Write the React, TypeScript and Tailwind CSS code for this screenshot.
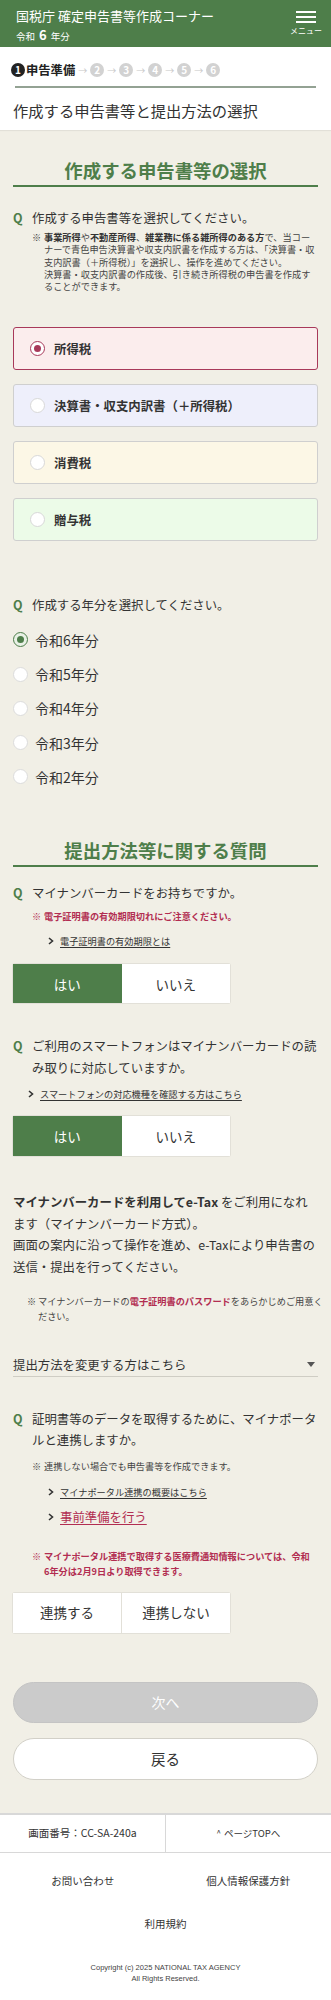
import React from 'react';

const GREEN = 'bg-[#4e7e4a]';

function Chevron({ className = '' }: { className?: string }) {
  return (
    <svg width="6" height="8" viewBox="0 0 6 8" className={`shrink-0 ${className}`}>
      <path d="M1 1 L4.5 4 L1 7" fill="none" stroke="#333" strokeWidth="1.6" />
    </svg>
  );
}

function Step({ n }: { n: number }) {
  return (
    <>
      <span className="mx-[3px] text-[9px] leading-none text-[#c8c8c8]">→</span>
      <span className="flex h-[14px] w-[14px] items-center justify-center rounded-full bg-[#d2d2d2] text-[10px] font-bold leading-none text-white">
        {n}
      </span>
    </>
  );
}

function CardRadio({ label, bg, selected }: { label: string; bg: string; selected?: boolean }) {
  return (
    <div
      className={`flex h-[43.5px] items-center rounded-[3px] pl-[16px] ${bg} ${
        selected ? 'border-[1.5px] border-[#a8395a]' : 'border-[1.5px] border-[#cfcfcf]'
      }`}
    >
      {selected ? (
        <span className="flex h-[15px] w-[15px] items-center justify-center rounded-full border-[1.5px] border-[#a8395a] bg-white">
          <span className="h-[7px] w-[7px] rounded-full bg-[#a8395a]" />
        </span>
      ) : (
        <span className="h-[15px] w-[15px] rounded-full border border-[#d8d8d8] bg-white" />
      )}
      <span className="ml-[9px] text-[12.4px] font-bold leading-[16px] text-[#333]">{label}</span>
    </div>
  );
}

function YearRadio({ label, selected }: { label: string; selected?: boolean }) {
  return (
    <div className="flex h-[20px] items-center">
      {selected ? (
        <span className="flex h-[15px] w-[15px] items-center justify-center rounded-full border-[1.5px] border-[#4e7e4a] bg-[#e9f1e6]">
          <span className="h-[7px] w-[7px] rounded-full bg-[#4e7e4a]" />
        </span>
      ) : (
        <span className="h-[15px] w-[15px] rounded-full border border-[#dcdcdc] bg-white" />
      )}
      <span className="ml-[7px] text-[14px] leading-[20px] text-[#333]">{label}</span>
    </div>
  );
}

function Question({ children }: { children: React.ReactNode }) {
  return (
    <div className="flex text-[12.4px] text-[#333]">
      <span className="w-[19px] shrink-0 font-bold text-[#4e7e4a]">Q</span>
      <span>{children}</span>
    </div>
  );
}

function Heading({ children }: { children: React.ReactNode }) {
  return (
    <div className="h-[29px] border-b-2 border-[#4e7e4a] text-center text-[18.4px] font-bold leading-[24px] text-[#4e7e4a]">
      {children}
    </div>
  );
}

function YesNo({ left, right, leftActive }: { left: string; right: string; leftActive?: boolean }) {
  return (
    <div className="flex h-full w-[217px] rounded-[2px] shadow-[0_0_0_1px_#e2e0d8]">
      <div
        className={`flex flex-1 items-center justify-center text-[13.5px] ${
          leftActive ? `${GREEN} text-white` : 'bg-white text-[#333]'
        }`}
      >
        {left}
      </div>
      <div
        className={`flex flex-1 items-center justify-center bg-white text-[13.5px] text-[#333] ${
          leftActive ? '' : 'border-l border-[#e2e0d8]'
        }`}
      >
        {right}
      </div>
    </div>
  );
}

export default function App() {
  return (
    <div
      className="w-[331px] bg-[#f1efe6] text-[#333]"
      style={{ fontFamily: '"Noto Sans CJK JP", "Noto Sans", sans-serif' }}
    >
      {/* header */}
      <header className={`flex h-[47px] justify-between ${GREEN} pl-[16px] pr-[9px] text-white`}>
        <div className="pt-[8px]">
          <div className="text-[13px] leading-[16px]">国税庁 確定申告書等作成コーナー</div>
          <div className="mt-[4px] flex h-[14px] items-baseline">
            <span className="text-[9.5px] leading-[14px]">令和</span>
            <span className="mx-[4px] text-[13px] font-bold leading-[14px]">6</span>
            <span className="text-[9.5px] leading-[14px]">年分</span>
          </div>
        </div>
        <div className="flex flex-col items-center pt-[11px]">
          <span className="block h-[2px] w-[20px] bg-white" />
          <span className="mt-[3px] block h-[2px] w-[20px] bg-white" />
          <span className="mt-[3px] block h-[2px] w-[20px] bg-white" />
          <span className="mt-[3px] text-[8px] leading-[10px]">メニュー</span>
        </div>
      </header>

      {/* progress + title */}
      <section className="h-[83px] bg-white px-[11px] pt-[15px] shadow-[0_1px_1px_rgba(0,0,0,0.06)]">
        <div className="flex h-[16px] items-center">
          <span className="flex h-[14px] w-[14px] items-center justify-center rounded-full bg-[#222] text-[10px] font-bold leading-none text-white">
            1
          </span>
          <span className="ml-[1px] text-[12.3px] font-bold leading-[16px] text-[#222]">申告準備</span>
          <Step n={2} />
          <Step n={3} />
          <Step n={4} />
          <Step n={5} />
          <Step n={6} />
        </div>
        <div className="mx-[4px] mt-[8px] h-[1.5px] bg-[#93a293]" />
        <div className="mt-[12.5px] h-[20px] pl-[2px] text-[15.3px] leading-[20px] text-[#333]">
          作成する申告書等と提出方法の選択
        </div>
      </section>

      <main className="px-[13px] pb-[33px] pt-[28px]">
        <Heading>作成する申告書等の選択</Heading>

        <div className="mt-[21px] leading-[20px]">
          <Question>作成する申告書等を選択してください。</Question>
        </div>
        <div className="mt-[3px] flex pl-[19px] text-[9.2px] leading-[12.3px] text-[#444]">
          <span className="w-[12px] shrink-0">※</span>
          <p>
            <b className="font-bold text-[#333]">事業所得</b>や<b className="font-bold text-[#333]">不動産所得</b>、
            <b className="font-bold text-[#333]">雑業務に係る雑所得のある方</b>
            で、当コーナーで青色申告決算書や収支内訳書を作成する方は、「決算書・収支内訳書（＋所得税）」を選択し、操作を進めてください。
            <br />
            決算書・収支内訳書の作成後、引き続き所得税の申告書を作成することができます。
          </p>
        </div>

        <div className="mt-[34.5px] flex flex-col gap-[13.5px]">
          <CardRadio label="所得税" bg="bg-[#fbeded]" selected />
          <CardRadio label="決算書・収支内訳書（＋所得税）" bg="bg-[#eeeffb]" />
          <CardRadio label="消費税" bg="bg-[#fcf7e6]" />
          <CardRadio label="贈与税" bg="bg-[#ecfbe8]" />
        </div>

        <div className="mt-[53.5px] leading-[20px]">
          <Question>作成する年分を選択してください。</Question>
        </div>
        <div className="mt-[15px] flex flex-col gap-[14.25px]">
          <YearRadio label="令和6年分" selected />
          <YearRadio label="令和5年分" />
          <YearRadio label="令和4年分" />
          <YearRadio label="令和3年分" />
          <YearRadio label="令和2年分" />
        </div>

        <div className="mt-[51px]">
          <Heading>提出方法等に関する質問</Heading>
        </div>

        <div className="mt-[16px] leading-[20px]">
          <Question>マイナンバーカードをお持ちですか。</Question>
        </div>
        <div className="mt-[7px] flex pl-[19px] text-[9.2px] font-bold leading-[12.3px] text-[#b22d51]">
          <span className="w-[12px] shrink-0">※</span>
          <span>電子証明書の有効期限切れにご注意ください。</span>
        </div>
        <div className="mt-[13px] flex h-[12px] items-center pl-[35px] text-[9.2px] leading-[12px]">
          <Chevron />
          <span className="ml-[6px] underline underline-offset-2">電子証明書の有効期限とは</span>
        </div>
        <div className="mt-[17px] h-[39px]">
          <YesNo left="はい" right="いいえ" leftActive />
        </div>

        <div className="mt-[33px] leading-[21.5px]">
          <Question>ご利用のスマートフォンはマイナンバーカードの読み取りに対応していますか。</Question>
        </div>
        <div className="mt-[8.75px] flex h-[12px] items-center pl-[15px] text-[9.2px] leading-[12px]">
          <Chevron />
          <span className="ml-[6px] underline underline-offset-2">スマートフォンの対応機種を確認する方はこちら</span>
        </div>
        <div className="mt-[16px] h-[40px]">
          <YesNo left="はい" right="いいえ" leftActive />
        </div>

        <p className="mt-[36px] text-[12.4px] leading-[21.7px] text-[#333]">
          <b className="font-bold">マイナンバーカードを利用してe-Tax</b> をご利用になれます（マイナンバーカード方式）。
          <br />
          画面の案内に沿って操作を進め、e-Taxにより申告書の送信・提出を行ってください。
        </p>
        <div className="mr-[-6px] mt-[15.5px] flex pl-[14px] text-[9.2px] leading-[15px] text-[#444]">
          <span className="w-[11px] shrink-0">※</span>
          <p>
            マイナンバーカードの<b className="font-bold text-[#b22d51]">電子証明書のパスワード</b>
            をあらかじめご用意ください。
          </p>
        </div>

        <div className="mt-[30.5px] flex items-center justify-between border-b border-[#cfcdc4] pb-[1px]">
          <span className="text-[12.4px] leading-[20px]">提出方法を変更する方はこちら</span>
          <svg width="8" height="5" viewBox="0 0 8 5" className="mr-[3px]">
            <path d="M0 0 H8 L4 5 Z" fill="#555" />
          </svg>
        </div>

        <div className="mt-[32px] leading-[21.5px]">
          <Question>証明書等のデータを取得するために、マイナポータルと連携しますか。</Question>
        </div>
        <div className="mt-[8.6px] flex pl-[19px] text-[9.2px] leading-[12.3px] text-[#444]">
          <span className="w-[12px] shrink-0">※</span>
          <span>連携しない場合でも申告書等を作成できます。</span>
        </div>
        <div className="mt-[12.85px] flex h-[12px] items-center pl-[35px] text-[9.2px] leading-[12px]">
          <Chevron />
          <span className="ml-[6px] underline underline-offset-2">マイナポータル連携の概要はこちら</span>
        </div>
        <div className="mt-[11px] flex h-[16px] items-center pl-[35px] text-[12.4px] leading-[16px]">
          <Chevron />
          <span className="ml-[6px] text-[#b22d51] underline underline-offset-2">事前準備を行う</span>
        </div>
        <div className="mt-[24.5px] flex pl-[19px] pr-[8px] text-[9.2px] font-bold leading-[15px] text-[#b22d51]">
          <span className="w-[12px] shrink-0">※</span>
          <span>マイナポータル連携で取得する医療費通知情報については、令和6年分は2月9日より取得できます。</span>
        </div>
        <div className="mt-[13.5px] h-[40px]">
          <YesNo left="連携する" right="連携しない" />
        </div>

        <button className="mt-[49px] flex h-[41px] w-full items-center justify-center rounded-full border border-[#c4c4c4] bg-[#cbcbcb] text-[14px] text-white">
          次へ
        </button>
        <button className="mt-[15px] flex h-[42px] w-full items-center justify-center rounded-full border border-[#d2d0c8] bg-white text-[14.5px] text-[#333]">
          戻る
        </button>
      </main>

      <footer className="border-t-2 border-[#d8d8d8] bg-white pb-[16px]">
        <div className="flex h-[38px] border-b border-[#d8d8d8]">
          <div className="flex flex-1 items-center justify-center border-r border-[#d8d8d8] text-[10.5px] text-[#333]">
            画面番号：CC-SA-240a
          </div>
          <div className="flex flex-1 items-center justify-center text-[9.5px] text-[#333]">
            <span className="mr-[3px] text-[8px]">^</span>ページTOPへ
          </div>
        </div>
        <div className="mt-[18px] flex text-[10.5px] leading-[20px]">
          <span className="flex-1 text-center">お問い合わせ</span>
          <span className="flex-1 text-center">個人情報保護方針</span>
        </div>
        <div className="mt-[23px] text-center text-[10.5px] leading-[20px]">利用規約</div>
        <div
          className="mt-[28px] text-center text-[7.5px] leading-[11px] text-[#444]"
          style={{ fontFamily: '"Liberation Sans", Arial, sans-serif' }}
        >
          Copyright (c) 2025 NATIONAL TAX AGENCY
          <br />
          All Rights Reserved.
        </div>
      </footer>
    </div>
  );
}
